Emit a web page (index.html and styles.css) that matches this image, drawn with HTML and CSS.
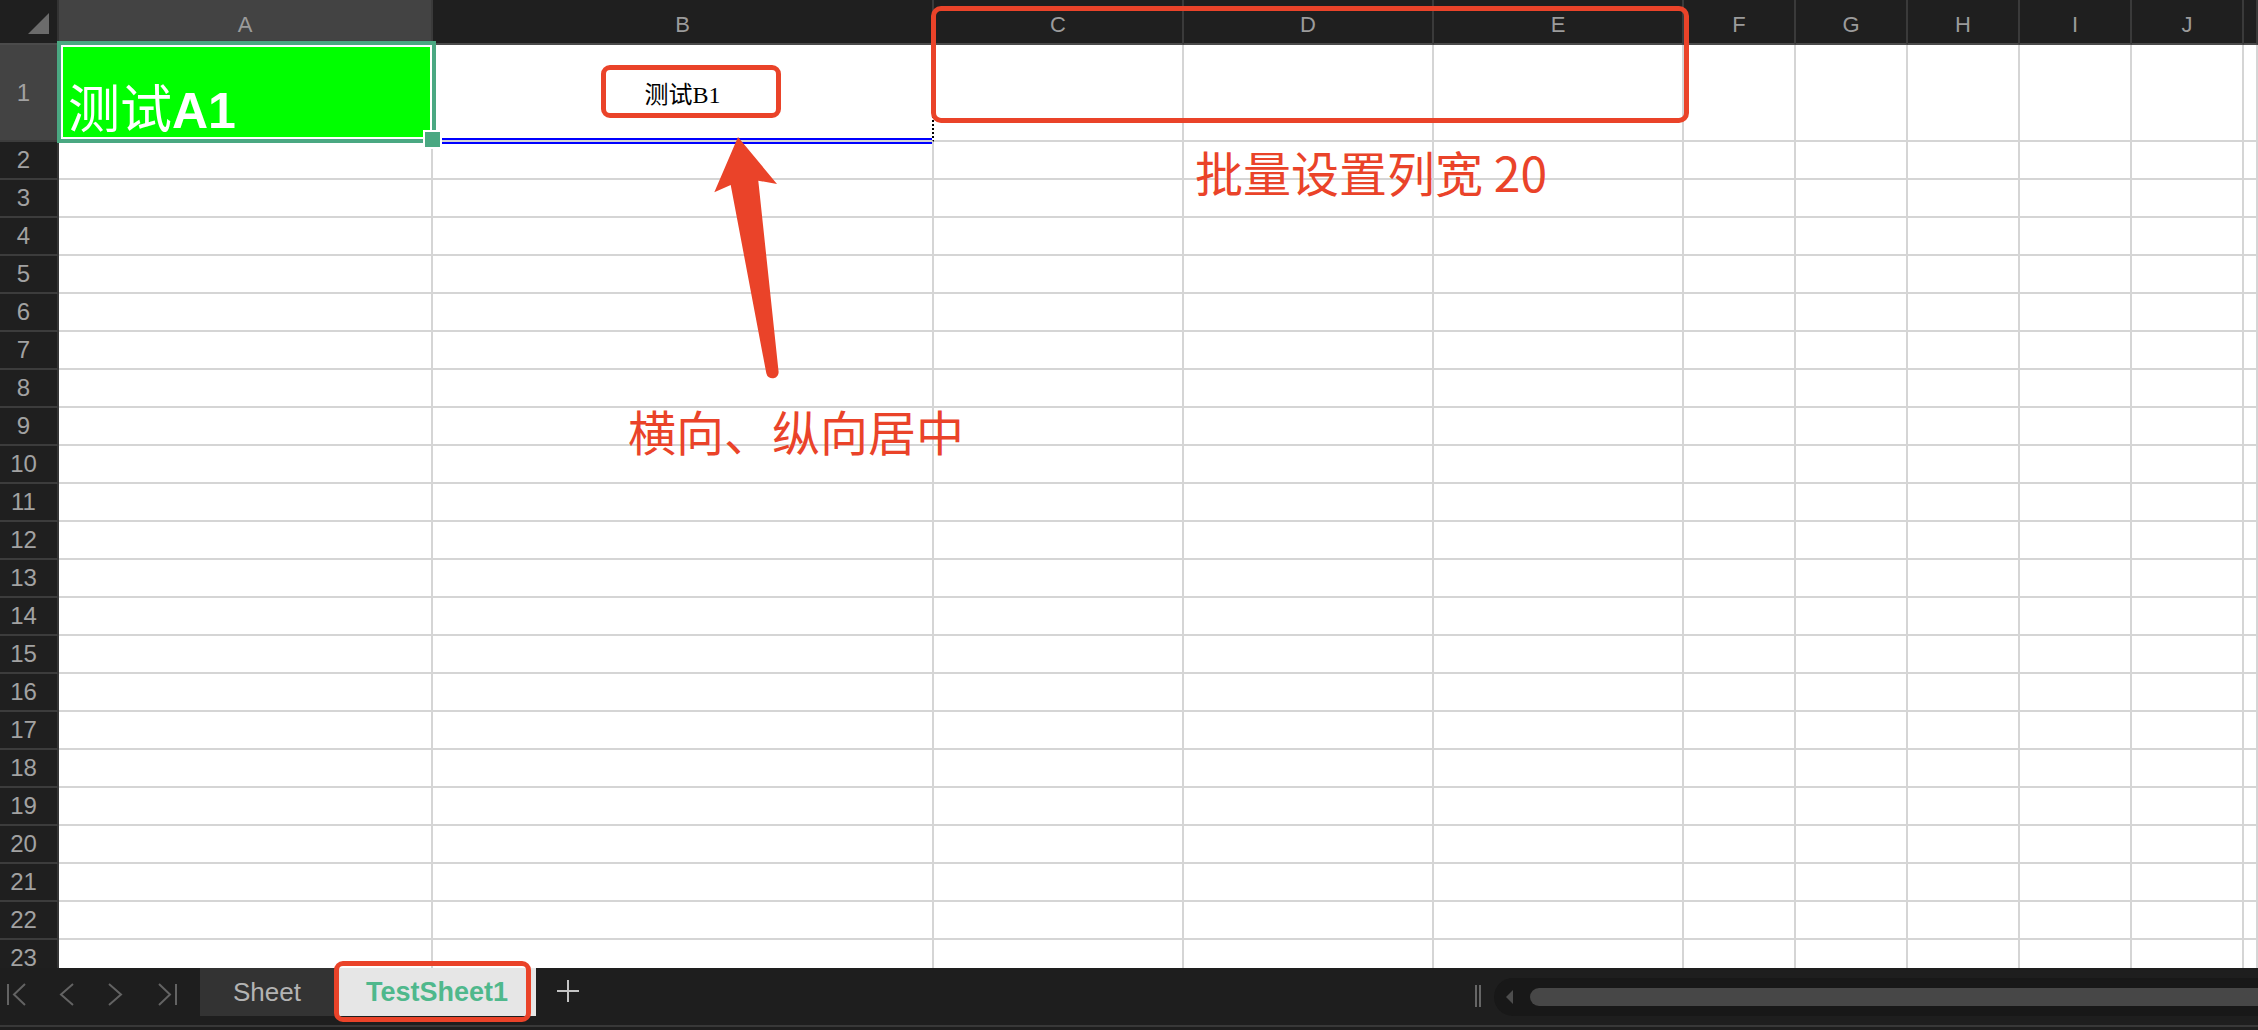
FILE: index.html
```html
<!DOCTYPE html>
<html lang="zh-CN">
<head>
<meta charset="utf-8">
<title>TestSheet1</title>
<link rel="stylesheet" href="styles.css">
</head>
<body>
<div class="app">
  <div class="sheet">
    <div class="row hdr">
      <div class="corner"><svg width="21" height="21" viewBox="0 0 21 21"><path d="M21 0V21H0Z" fill="#6b6b6b"/></svg></div>
      <div class="ch sel">A</div><div class="ch">B</div><div class="ch">C</div><div class="ch">D</div><div class="ch">E</div><div class="ch">F</div><div class="ch">G</div><div class="ch">H</div><div class="ch">I</div><div class="ch">J</div><div class="ch"></div>
    </div>
    <div class="row r1">
      <div class="rh sel">1</div>
      <div class="c a1"><span class="txt"><span class="cjk">测试</span><b class="lat">A1</b></span></div>
      <div class="c b1">测试B1</div>
      <div class="c"></div><div class="c"></div><div class="c"></div><div class="c"></div><div class="c"></div><div class="c"></div><div class="c"></div><div class="c"></div><div class="c"></div>
    </div>
    <div class="row"><div class="rh">2</div><div class="c"></div><div class="c"></div><div class="c"></div><div class="c"></div><div class="c"></div><div class="c"></div><div class="c"></div><div class="c"></div><div class="c"></div><div class="c"></div><div class="c"></div></div>
    <div class="row"><div class="rh">3</div><div class="c"></div><div class="c"></div><div class="c"></div><div class="c"></div><div class="c"></div><div class="c"></div><div class="c"></div><div class="c"></div><div class="c"></div><div class="c"></div><div class="c"></div></div>
    <div class="row"><div class="rh">4</div><div class="c"></div><div class="c"></div><div class="c"></div><div class="c"></div><div class="c"></div><div class="c"></div><div class="c"></div><div class="c"></div><div class="c"></div><div class="c"></div><div class="c"></div></div>
    <div class="row"><div class="rh">5</div><div class="c"></div><div class="c"></div><div class="c"></div><div class="c"></div><div class="c"></div><div class="c"></div><div class="c"></div><div class="c"></div><div class="c"></div><div class="c"></div><div class="c"></div></div>
    <div class="row"><div class="rh">6</div><div class="c"></div><div class="c"></div><div class="c"></div><div class="c"></div><div class="c"></div><div class="c"></div><div class="c"></div><div class="c"></div><div class="c"></div><div class="c"></div><div class="c"></div></div>
    <div class="row"><div class="rh">7</div><div class="c"></div><div class="c"></div><div class="c"></div><div class="c"></div><div class="c"></div><div class="c"></div><div class="c"></div><div class="c"></div><div class="c"></div><div class="c"></div><div class="c"></div></div>
    <div class="row"><div class="rh">8</div><div class="c"></div><div class="c"></div><div class="c"></div><div class="c"></div><div class="c"></div><div class="c"></div><div class="c"></div><div class="c"></div><div class="c"></div><div class="c"></div><div class="c"></div></div>
    <div class="row"><div class="rh">9</div><div class="c"></div><div class="c"></div><div class="c"></div><div class="c"></div><div class="c"></div><div class="c"></div><div class="c"></div><div class="c"></div><div class="c"></div><div class="c"></div><div class="c"></div></div>
    <div class="row"><div class="rh">10</div><div class="c"></div><div class="c"></div><div class="c"></div><div class="c"></div><div class="c"></div><div class="c"></div><div class="c"></div><div class="c"></div><div class="c"></div><div class="c"></div><div class="c"></div></div>
    <div class="row"><div class="rh">11</div><div class="c"></div><div class="c"></div><div class="c"></div><div class="c"></div><div class="c"></div><div class="c"></div><div class="c"></div><div class="c"></div><div class="c"></div><div class="c"></div><div class="c"></div></div>
    <div class="row"><div class="rh">12</div><div class="c"></div><div class="c"></div><div class="c"></div><div class="c"></div><div class="c"></div><div class="c"></div><div class="c"></div><div class="c"></div><div class="c"></div><div class="c"></div><div class="c"></div></div>
    <div class="row"><div class="rh">13</div><div class="c"></div><div class="c"></div><div class="c"></div><div class="c"></div><div class="c"></div><div class="c"></div><div class="c"></div><div class="c"></div><div class="c"></div><div class="c"></div><div class="c"></div></div>
    <div class="row"><div class="rh">14</div><div class="c"></div><div class="c"></div><div class="c"></div><div class="c"></div><div class="c"></div><div class="c"></div><div class="c"></div><div class="c"></div><div class="c"></div><div class="c"></div><div class="c"></div></div>
    <div class="row"><div class="rh">15</div><div class="c"></div><div class="c"></div><div class="c"></div><div class="c"></div><div class="c"></div><div class="c"></div><div class="c"></div><div class="c"></div><div class="c"></div><div class="c"></div><div class="c"></div></div>
    <div class="row"><div class="rh">16</div><div class="c"></div><div class="c"></div><div class="c"></div><div class="c"></div><div class="c"></div><div class="c"></div><div class="c"></div><div class="c"></div><div class="c"></div><div class="c"></div><div class="c"></div></div>
    <div class="row"><div class="rh">17</div><div class="c"></div><div class="c"></div><div class="c"></div><div class="c"></div><div class="c"></div><div class="c"></div><div class="c"></div><div class="c"></div><div class="c"></div><div class="c"></div><div class="c"></div></div>
    <div class="row"><div class="rh">18</div><div class="c"></div><div class="c"></div><div class="c"></div><div class="c"></div><div class="c"></div><div class="c"></div><div class="c"></div><div class="c"></div><div class="c"></div><div class="c"></div><div class="c"></div></div>
    <div class="row"><div class="rh">19</div><div class="c"></div><div class="c"></div><div class="c"></div><div class="c"></div><div class="c"></div><div class="c"></div><div class="c"></div><div class="c"></div><div class="c"></div><div class="c"></div><div class="c"></div></div>
    <div class="row"><div class="rh">20</div><div class="c"></div><div class="c"></div><div class="c"></div><div class="c"></div><div class="c"></div><div class="c"></div><div class="c"></div><div class="c"></div><div class="c"></div><div class="c"></div><div class="c"></div></div>
    <div class="row"><div class="rh">21</div><div class="c"></div><div class="c"></div><div class="c"></div><div class="c"></div><div class="c"></div><div class="c"></div><div class="c"></div><div class="c"></div><div class="c"></div><div class="c"></div><div class="c"></div></div>
    <div class="row"><div class="rh">22</div><div class="c"></div><div class="c"></div><div class="c"></div><div class="c"></div><div class="c"></div><div class="c"></div><div class="c"></div><div class="c"></div><div class="c"></div><div class="c"></div><div class="c"></div></div>
    <div class="row"><div class="rh">23</div><div class="c"></div><div class="c"></div><div class="c"></div><div class="c"></div><div class="c"></div><div class="c"></div><div class="c"></div><div class="c"></div><div class="c"></div><div class="c"></div><div class="c"></div></div>

    <div class="selection"></div>
    <div class="handle"></div>
    <div class="blue-border"></div>
    <div class="mark mark-cols"></div>
    <div class="mark mark-b1"></div>
    <svg class="arrow" width="100" height="270" viewBox="0 0 100 270"><path d="M38 17 L77 64 L58.3 60.7 L78.5 251 A6.2 6.2 0 0 1 66.3 253.3 L30.7 65 L14.3 72.3 Z" fill="#ea4329"/></svg>
    <div class="note note-width">批量设置列宽 20</div>
    <div class="note note-center">横向、纵向居中</div>
  </div>

  <div class="tabbar">
    <svg class="nav" width="200" height="48" viewBox="0 0 200 48" fill="none" stroke="#636363" stroke-width="2">
      <path d="M8 16V37M25 16L14 26.5L25 37"/>
      <path d="M73 16L61 26.5L73 37"/>
      <path d="M109 16L121 26.5L109 37"/>
      <path d="M159 16L170 26.5L159 37M176 16V37"/>
    </svg>
    <div class="tab tab-sheet">Sheet</div>
    <div class="tab tab-active">TestSheet1<div class="mark mark-tab"></div></div>
    <svg class="add" width="24" height="24" viewBox="0 0 24 24"><path d="M12 1V23M1 12H23" stroke="#c4c4c4" stroke-width="2"/></svg>
    <div class="scroll">
      <div class="grip"></div>
      <div class="track">
        <div class="track-arrow"></div>
        <div class="thumb"></div>
      </div>
    </div>
  </div>
</div>
</body>
</html>
```

FILE: styles.css
```css
html, body {
  margin: 0;
  padding: 0;
}

body {
  width: 2258px;
  height: 1030px;
  overflow: hidden;
  background: #1e1e1e;
  font-family: "Liberation Sans", "Noto Sans CJK SC", sans-serif;
}

.sheet {
  position: relative;
  height: 968px;
  overflow: hidden;
  background: #fff;
}

.row {
  display: grid;
  grid-template-columns: 59px 374px 501px 250px 250px 250px 112px 112px 112px 112px 112px 14px;
  height: 38px;
}

.hdr {
  height: 45px;
}

.r1 {
  height: 97px;
}

.corner {
  box-sizing: border-box;
  background: #1f1f1f;
  border-right: 2px solid #333;
  border-bottom: 2px solid #4b4b4b;
  padding: 13px 0 0 28px;
}

.corner svg {
  display: block;
}

.ch {
  box-sizing: border-box;
  background: #1f1f1f;
  border-right: 2px solid #3a3a3a;
  border-bottom: 2px solid #4b4b4b;
  color: #9b9b9b;
  font-size: 22px;
  text-align: center;
  padding-top: 6px;
  line-height: 37px;
}

.ch.sel {
  background: #434343;
}

.rh {
  box-sizing: border-box;
  background: #1f1f1f;
  border-right: 2px solid #363636;
  border-bottom: 2px solid #3c3c3c;
  color: #a2a2a2;
  font-size: 24px;
  display: flex;
  align-items: center;
  justify-content: center;
  padding-right: 10px;
}

.rh.sel {
  background: #434343;
}

.c {
  box-sizing: border-box;
  border-right: 2px solid #d5d5d5;
  border-bottom: 2px solid #d5d5d5;
  background: #fff;
}

.a1 {
  background: #00ff00;
  color: #fff;
  display: flex;
  align-items: flex-end;
  padding: 0 0 4px 9px;
  white-space: nowrap;
  overflow: hidden;
}

.a1 .cjk {
  font-family: "Noto Sans CJK SC", sans-serif;
  font-weight: 400;
  font-size: 52px;
  line-height: 52px;
}

.a1 .lat {
  font-family: "Liberation Sans", sans-serif;
  font-weight: 700;
  font-size: 50px;
  line-height: 50px;
}

.b1 {
  display: flex;
  align-items: center;
  justify-content: center;
  font-family: "Liberation Serif", "Noto Sans CJK SC", serif;
  font-size: 24px;
  color: #000;
  border-right: 2px dotted #000;
}

.selection {
  position: absolute;
  left: 57px;
  top: 41px;
  width: 379px;
  height: 102px;
  box-sizing: border-box;
  border: 4px solid #4aa882;
  box-shadow: inset 0 0 0 2px #fff;
}

.handle {
  position: absolute;
  left: 423px;
  top: 130px;
  width: 15px;
  height: 15px;
  background: #4aa882;
  border: 2px solid #fff;
}

.blue-border {
  position: absolute;
  left: 442px;
  top: 138px;
  width: 490px;
  border-top: 6px double #0000ff;
}

.mark {
  position: absolute;
  box-sizing: border-box;
  border: 5px solid #ea4329;
  border-radius: 10px;
}

.mark-cols {
  left: 931px;
  top: 6px;
  width: 758px;
  height: 117px;
}

.mark-b1 {
  left: 601px;
  top: 65px;
  width: 180px;
  height: 53px;
  border-radius: 9px;
}

.arrow {
  position: absolute;
  left: 700px;
  top: 120px;
}

.note {
  position: absolute;
  color: #ea4329;
  font-family: "Noto Sans CJK SC", sans-serif;
  font-size: 48px;
  line-height: 48px;
  white-space: nowrap;
}

.note-width {
  left: 1195px;
  top: 147px;
}

.note-center {
  left: 628px;
  top: 406px;
}

.tabbar {
  height: 57px;
  border-bottom: 2px solid #383838;
  display: flex;
  align-items: flex-start;
  background: #1e1e1e;
}

.nav {
  display: block;
  flex: none;
}

.tab {
  box-sizing: border-box;
  height: 48px;
  line-height: 48px;
  text-align: center;
  flex: none;
}

.tab-sheet {
  width: 134px;
  margin-right: 4px;
  background: #333;
  color: #b3b3b3;
  font-size: 26px;
}

.tab-active {
  position: relative;
  width: 198px;
  background: #e6e6e6;
  color: #4fb88c;
  font-weight: 700;
  font-size: 27px;
}

.mark-tab {
  left: -4px;
  top: -7px;
  width: 197px;
  height: 61px;
  border-radius: 9px;
}

.add {
  display: block;
  flex: none;
  margin: 11px 0 0 20px;
}

.scroll {
  margin-left: auto;
  display: flex;
  align-items: flex-start;
}

.grip {
  box-sizing: border-box;
  width: 6px;
  height: 22px;
  margin: 17px 13px 0 0;
  border-left: 2px solid #666;
  border-right: 2px solid #666;
}

.track {
  width: 764px;
  height: 38px;
  margin-top: 10px;
  background: #181818;
  border-radius: 19px 0 0 19px;
  display: flex;
  align-items: center;
}

.track-arrow {
  width: 0;
  height: 0;
  margin-left: 12px;
  border-right: 7px solid #4d4d4d;
  border-top: 7px solid transparent;
  border-bottom: 7px solid transparent;
}

.thumb {
  flex: 1;
  height: 18px;
  margin-left: 17px;
  background: #474747;
  border-radius: 9px 0 0 9px;
}
```
